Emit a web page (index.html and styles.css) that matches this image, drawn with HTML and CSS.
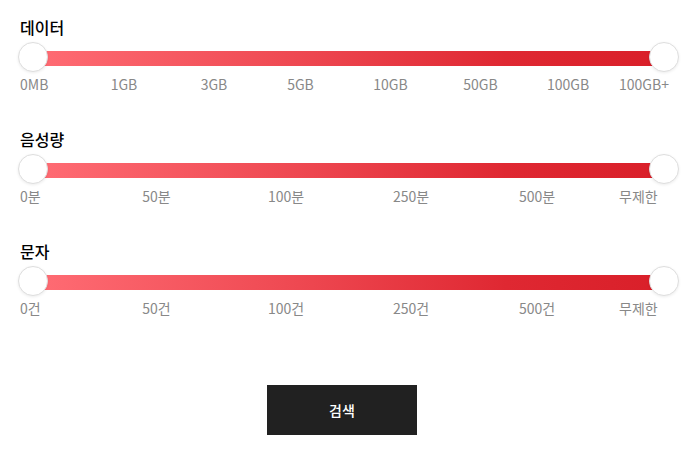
FILE: index.html
```html
<!DOCTYPE html>
<html lang="ko">
<head>
<meta charset="utf-8">
<link rel="stylesheet" href="styles.css">
</head>
<body>
<div class="page">
  <section class="field">
    <h3 class="field-title">데이터</h3>
    <div class="slider">
      <div class="track"></div>
      <span class="thumb"></span>
      <span class="thumb"></span>
    </div>
    <div class="scale">
      <span class="tick tick-first"><span>0MB</span></span>
      <span class="tick"><span>1GB</span></span>
      <span class="tick"><span>3GB</span></span>
      <span class="tick nudge-3"><span>5GB</span></span>
      <span class="tick nudge-3"><span>10GB</span></span>
      <span class="tick nudge-3"><span>50GB</span></span>
      <span class="tick nudge-5"><span>100GB</span></span>
      <span class="tick tick-last"><span>100GB+</span></span>
    </div>
  </section>
  <section class="field">
    <h3 class="field-title">음성량</h3>
    <div class="slider">
      <div class="track"></div>
      <span class="thumb"></span>
      <span class="thumb"></span>
    </div>
    <div class="scale">
      <span class="tick tick-first"><span>0분</span></span>
      <span class="tick nudge-3"><span>50분</span></span>
      <span class="tick"><span>100분</span></span>
      <span class="tick nudge-1"><span>250분</span></span>
      <span class="tick nudge-1"><span>500분</span></span>
      <span class="tick tick-last"><span>무제한</span></span>
    </div>
  </section>
  <section class="field">
    <h3 class="field-title">문자</h3>
    <div class="slider">
      <div class="track"></div>
      <span class="thumb"></span>
      <span class="thumb"></span>
    </div>
    <div class="scale">
      <span class="tick tick-first"><span>0건</span></span>
      <span class="tick nudge-3"><span>50건</span></span>
      <span class="tick"><span>100건</span></span>
      <span class="tick nudge-1"><span>250건</span></span>
      <span class="tick nudge-1"><span>500건</span></span>
      <span class="tick tick-last"><span>무제한</span></span>
    </div>
  </section>
  <div class="actions">
    <button class="search-btn" type="button">검색</button>
  </div>
</div>
</body>
</html>
```
FILE: styles.css
```css
* { box-sizing: border-box; }
html, body { margin: 0; padding: 0; background: #fff; }
body {
  font-family: "Noto Sans CJK KR", "Noto Sans", sans-serif;
  width: 685px;
  height: 451px;
  overflow: hidden;
}
.page {
  padding: 15px 0 0 18px;
}
.field {
  height: 112px;
}
.field-title {
  margin: 0 0 0 2px;
  font-size: 16px;
  line-height: 24px;
  font-weight: 500;
  color: #000;
}
.slider {
  position: relative;
  width: 661px;
  height: 30px;
  margin-top: 3px;
  display: flex;
  align-items: center;
  justify-content: space-between;
}
.track {
  position: absolute;
  left: 15px;
  right: 15px;
  top: 9px;
  height: 15px;
  background: linear-gradient(to right, #ff6c74 0%, #ef4a53 40%, #df2832 75%, #d91f29 100%);
}
.thumb {
  position: relative;
  width: 30px;
  height: 30px;
  border-radius: 50%;
  background: #fff;
  border: 1px solid #dedede;
  box-shadow: 0 1px 3px rgba(0, 0, 0, 0.08);
}
.scale {
  display: flex;
  justify-content: space-between;
  width: 630px;
  margin-left: 16px;
  margin-top: 2px;
  font-size: 14px;
  line-height: 20px;
  color: #888;
}
.tick {
  width: 0;
  display: flex;
  justify-content: center;
  white-space: nowrap;
}
.nudge-1 > span { margin-left: -2px; }
.nudge-3 > span { margin-left: -7px; }
.nudge-5 > span { margin-left: -12px; }
.tick-first {
  justify-content: flex-start;
}
.tick-first > span {
  margin-left: -14px;
}
.tick-last {
  justify-content: flex-start;
}
.tick-last > span {
  margin-left: -45px;
}
.actions {
  display: flex;
  justify-content: center;
  margin-left: -19px;
  margin-top: 34px;
}
.search-btn {
  width: 150px;
  height: 50px;
  border: 0;
  background: #212121;
  color: #fff;
  font-family: inherit;
  font-size: 14px;
  font-weight: 500;
}
```
